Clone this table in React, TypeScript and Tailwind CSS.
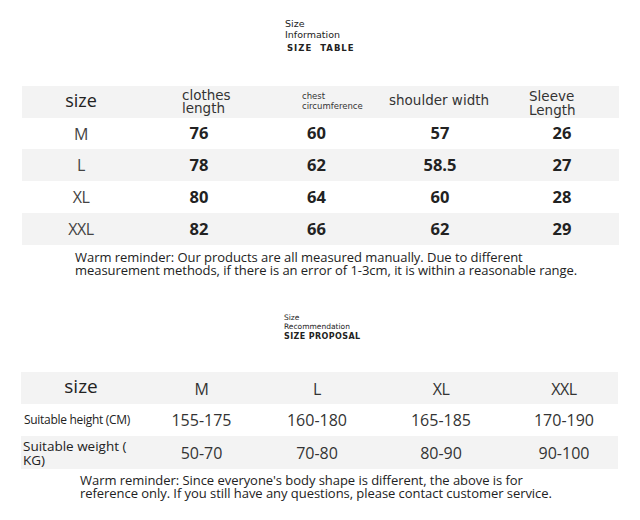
import React from 'react';

const sizeRows = [
  { size: 'M', length: '76', chest: '60', shoulder: '57', sleeve: '26' },
  { size: 'L', length: '78', chest: '62', shoulder: '58.5', sleeve: '27' },
  { size: 'XL', length: '80', chest: '64', shoulder: '60', sleeve: '28' },
  { size: 'XXL', length: '82', chest: '66', shoulder: '62', sleeve: '29' },
];

const proposal = [
  { label: 'M', height: '155-175', weight: '50-70' },
  { label: 'L', height: '160-180', weight: '70-80' },
  { label: 'XL', height: '165-185', weight: '80-90' },
  { label: 'XXL', height: '170-190', weight: '90-100' },
];

const tableCols = 'grid grid-cols-[118px_118px_117px_130px_114px]';
const proposalCols = 'grid grid-cols-[120px_121px_110px_138px_108px]';

export default function App() {
  return (
    <div className="relative w-[640px] h-[520px] bg-white overflow-hidden font-['Open_Sans',sans-serif] text-[#222]">
      {/* size table title */}
      <div className="h-[86px] pt-[18px] pl-[285px] font-['DejaVu_Sans',sans-serif]">
        <div className="text-[9.5px] leading-[11px]">Size</div>
        <div className="text-[9.5px] leading-[11px]">Information</div>
        <div className="mt-[2px] pl-[2px] text-[8.5px] leading-[12px] font-bold tracking-[1px]">SIZE&nbsp; TABLE</div>
      </div>

      {/* size table */}
      <div className="ml-[22px] w-[597px]">
        <div className={`${tableCols} h-[32px] bg-[#f3f3f3] items-center font-['DejaVu_Sans',sans-serif]`}>
          <div className="text-center text-[18px] text-[#222] font-['Open_Sans',sans-serif] pb-[3px]">size</div>
          <div className="pl-[42px] text-[13.5px] leading-[13px] text-[#333]">
            clothes
            <br />
            length
          </div>
          <div className="pl-[44px] text-[8.5px] leading-[10px] text-[#333] pb-[2px]">
            chest
            <br />
            circumference
          </div>
          <div className="pl-[14px] text-[13.5px] text-[#333] whitespace-nowrap pb-[4px]">shoulder width</div>
          <div className="pl-[24px] text-[13.5px] leading-[14px] text-[#333] pt-[2px]">
            Sleeve
            <br />
            Length
          </div>
        </div>
        {sizeRows.map((r, i) => (
          <div
            key={r.size}
            className={`${tableCols} ${i === 0 ? 'h-[31px]' : 'h-[32px]'} items-center ${i % 2 === 1 ? 'bg-[#f3f3f3]' : 'bg-white'}`}
          >
            <div className="text-center text-[16px] text-[#444] tracking-[-0.5px]">{r.size}</div>
            <div className="text-center text-[16.5px] font-bold">{r.length}</div>
            <div className="text-center text-[16.5px] font-bold">{r.chest}</div>
            <div className="text-center text-[16.5px] font-bold">{r.shoulder}</div>
            <div className="text-center text-[16.5px] font-bold">{r.sleeve}</div>
          </div>
        ))}
      </div>

      {/* reminder 1 */}
      <div className="h-[68px] pt-[6px] pl-[75px] text-[13px] leading-[13px] tracking-[-0.05px] text-[#222]">
        Warm reminder: Our products are all measured manually. Due to different
        <br />
        measurement methods, if there is an error of 1-3cm, it is within a reasonable range.
      </div>

      {/* size proposal title */}
      <div className="h-[59px] pl-[284px] font-['DejaVu_Sans',sans-serif]">
        <div className="text-[7.5px] leading-[9px]">Size</div>
        <div className="text-[7.5px] leading-[9px]">Recommendation</div>
        <div className="text-[8px] leading-[11px] font-bold tracking-[0.4px]">SIZE PROPOSAL</div>
      </div>

      {/* size proposal table */}
      <div className="ml-[21px] w-[597px]">
        <div className={`${proposalCols} h-[32px] bg-[#f3f3f3] items-center`}>
          <div className="text-center text-[19px] leading-[20px] pb-[4px]">size</div>
          {proposal.map((p) => (
            <div key={p.label} className="text-center text-[16px] text-[#333] tracking-[-0.5px] pt-[2px]">
              {p.label}
            </div>
          ))}
        </div>
        <div className={`${proposalCols} h-[32px] bg-white items-center`}>
          <div className="pl-[3px] text-[12px] text-[#222] whitespace-nowrap tracking-[-0.3px]">Suitable height (CM)</div>
          {proposal.map((p) => (
            <div key={p.label} className="text-center text-[16px] text-[#333]">
              {p.height}
            </div>
          ))}
        </div>
        <div className={`${proposalCols} h-[33px] bg-[#f3f3f3] items-center`}>
          <div className="pl-[2px] text-[13.5px] leading-[14px] text-[#222]">
            Suitable weight (
            <br />
            KG)
          </div>
          {proposal.map((p) => (
            <div key={p.label} className="text-center text-[16px] text-[#333]">
              {p.weight}
            </div>
          ))}
        </div>
      </div>

      {/* reminder 2 */}
      <div className="pt-[5px] pl-[80px] text-[13px] leading-[13px] tracking-[-0.05px] text-[#222]">
        Warm reminder: Since everyone's body shape is different, the above is for
        <br />
        reference only. If you still have any questions, please contact customer service.
      </div>
    </div>
  );
}
